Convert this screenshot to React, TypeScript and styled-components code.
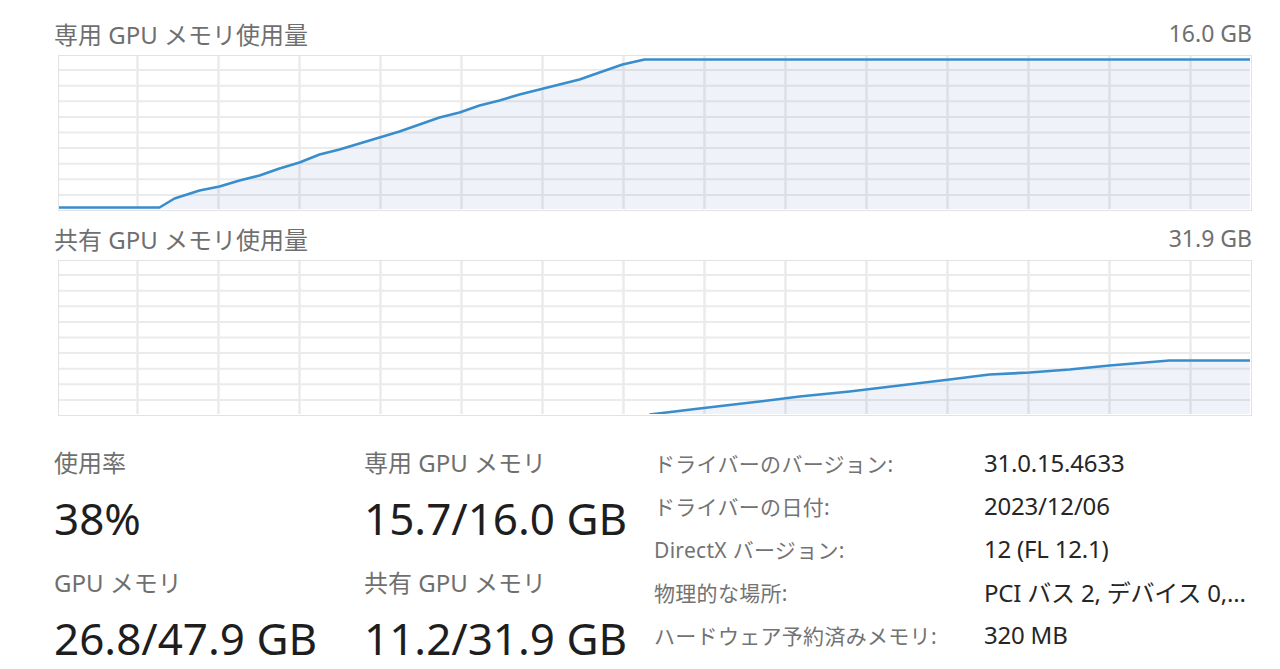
import { FC } from "react";
import styled, { createGlobalStyle } from "styled-components";

const CHART_W = 1194;
const CHART_H = 156;
const ROWS = 10;
const COL_OFFSET = 80;
const COL_STEP = 81;
const LINE = "#3a8dcc";

const GlobalStyle = createGlobalStyle`
  html, body {
    margin: 0;
    padding: 0;
    background: #ffffff;
  }
  body {
    font-family: "Noto Sans", "Noto Sans CJK JP", sans-serif;
    -webkit-font-smoothing: antialiased;
  }
`;

const Page = styled.div`
  width: 1280px;
  height: 669px;
  box-sizing: border-box;
  padding: 18px 28px 0 54px;
  display: flex;
  flex-direction: column;
  overflow: hidden;
`;

const ChartHeader = styled.div<{ $gap: number }>`
  display: flex;
  justify-content: space-between;
  align-items: center;
  height: 30px;
  margin-top: ${(p) => p.$gap}px;
  font-size: 24px;
  color: #6f6f6f;
  white-space: nowrap;
`;

const Max = styled.span`
  font-size: 23px;
`;

const ChartBox = styled.div`
  margin: 7px 0 0 4px;
  width: ${CHART_W}px;
  height: ${CHART_H}px;
  box-sizing: border-box;
  border: 1.5px solid #e2e2e2;
  overflow: hidden;

  svg {
    display: block;
  }
`;

const Details = styled.div`
  display: grid;
  grid-template-columns: 310px 290px 330px 1fr;
  margin-top: 25px;
`;

const StatColumn = styled.div`
  padding-top: 6px;
  display: flex;
  flex-direction: column;
`;

const Stat = styled.div<{ $first?: boolean }>`
  margin-top: ${(p) => (p.$first ? 0 : 24)}px;
`;

const StatLabel = styled.div`
  height: 32px;
  line-height: 32px;
  font-size: 24px;
  color: #6f6f6f;
  white-space: nowrap;
`;

const StatValue = styled.div`
  margin-top: 14px;
  height: 50px;
  line-height: 50px;
  font-size: 44px;
  color: #1e1e1e;
  white-space: nowrap;
`;

const InfoList = styled.div`
  grid-column: 3 / 5;
  display: grid;
  grid-template-columns: 330px 1fr;
  grid-auto-rows: 43px;
  align-items: center;
`;

const InfoLabel = styled.div`
  font-size: 21px;
  color: #737373;
  white-space: nowrap;
  letter-spacing: 0.3px;
`;

const InfoValue = styled.div`
  font-size: 24px;
  color: #262626;
  white-space: nowrap;
  letter-spacing: -0.2px;
`;

type Pt = [number, number];

const dedicated: Pt[] = [
  [58, 208], [160, 208], [175, 199], [200, 191], [220, 187], [240, 181],
  [260, 176], [280, 169], [300, 163], [320, 155], [340, 150], [360, 144],
  [380, 138], [400, 132], [420, 125], [440, 118], [460, 113], [480, 106],
  [500, 101], [520, 95], [540, 90], [560, 85], [580, 80], [600, 73],
  [623, 65], [645, 60], [1252, 60],
].map(([x, y]) => [x - 58, y - 55] as Pt);

const shared: Pt[] = [
  [650, 415], [700, 409], [760, 402], [800, 397], [850, 392], [900, 386],
  [950, 380], [990, 375], [1030, 373], [1070, 370], [1110, 366],
  [1170, 361], [1252, 361],
].map(([x, y]) => [x - 58, y - 260] as Pt);

const Chart: FC<{ points: Pt[] }> = ({ points }) => {
  const rows = Array.from({ length: ROWS - 1 }, (_, i) => ((i + 1) * CHART_H) / ROWS);
  const cols: number[] = [];
  for (let x = COL_OFFSET; x < CHART_W; x += COL_STEP) cols.push(x);
  const line = points.map(([x, y]) => `${x},${y}`).join(" ");
  const first = points[0];
  const last = points[points.length - 1];
  const area = `${first[0]},${CHART_H} ${line} ${last[0]},${CHART_H}`;

  return (
    <ChartBox>
      <svg width={CHART_W - 3} height={CHART_H - 3} viewBox={`1.5 1.5 ${CHART_W - 3} ${CHART_H - 3}`}>
        {rows.map((y) => (
          <line key={`r${y}`} x1={0} x2={CHART_W} y1={y} y2={y} stroke="#ebebeb" strokeWidth={2} />
        ))}
        {cols.map((x) => (
          <line key={`c${x}`} x1={x} x2={x} y1={0} y2={CHART_H} stroke="#ebebeb" strokeWidth={2.5} />
        ))}
        <polygon points={area} fill="rgba(40,100,170,0.075)" />
        <polyline points={line} fill="none" stroke={LINE} strokeWidth={2.6} strokeLinejoin="round" />
      </svg>
    </ChartBox>
  );
};

const info: [string, string][] = [
  ["ドライバーのバージョン:", "31.0.15.4633"],
  ["ドライバーの日付:", "2023/12/06"],
  ["DirectX バージョン:", "12 (FL 12.1)"],
  ["物理的な場所:", "PCI バス 2, デバイス 0,..."],
  ["ハードウェア予約済みメモリ:", "320 MB"],
];

const InfoRow: FC<{ label: string; value: string }> = ({ label, value }) => (
  <>
    <InfoLabel>{label}</InfoLabel>
    <InfoValue>{value}</InfoValue>
  </>
);

export default function App() {
  return (
    <>
      <GlobalStyle />
      <Page>
        <ChartHeader $gap={0}>
          <span>専用 GPU メモリ使用量</span>
          <Max>16.0 GB</Max>
        </ChartHeader>
        <Chart points={dedicated} />

        <ChartHeader $gap={12}>
          <span>共有 GPU メモリ使用量</span>
          <Max>31.9 GB</Max>
        </ChartHeader>
        <Chart points={shared} />

        <Details>
          <StatColumn>
            <Stat $first>
              <StatLabel>使用率</StatLabel>
              <StatValue>38%</StatValue>
            </Stat>
            <Stat>
              <StatLabel>GPU メモリ</StatLabel>
              <StatValue>26.8/47.9 GB</StatValue>
            </Stat>
          </StatColumn>
          <StatColumn>
            <Stat $first>
              <StatLabel>専用 GPU メモリ</StatLabel>
              <StatValue>15.7/16.0 GB</StatValue>
            </Stat>
            <Stat>
              <StatLabel>共有 GPU メモリ</StatLabel>
              <StatValue>11.2/31.9 GB</StatValue>
            </Stat>
          </StatColumn>
          <InfoList>
            {info.map(([label, value]) => (
              <InfoRow key={label} label={label} value={value} />
            ))}
          </InfoList>
        </Details>
      </Page>
    </>
  );
}
